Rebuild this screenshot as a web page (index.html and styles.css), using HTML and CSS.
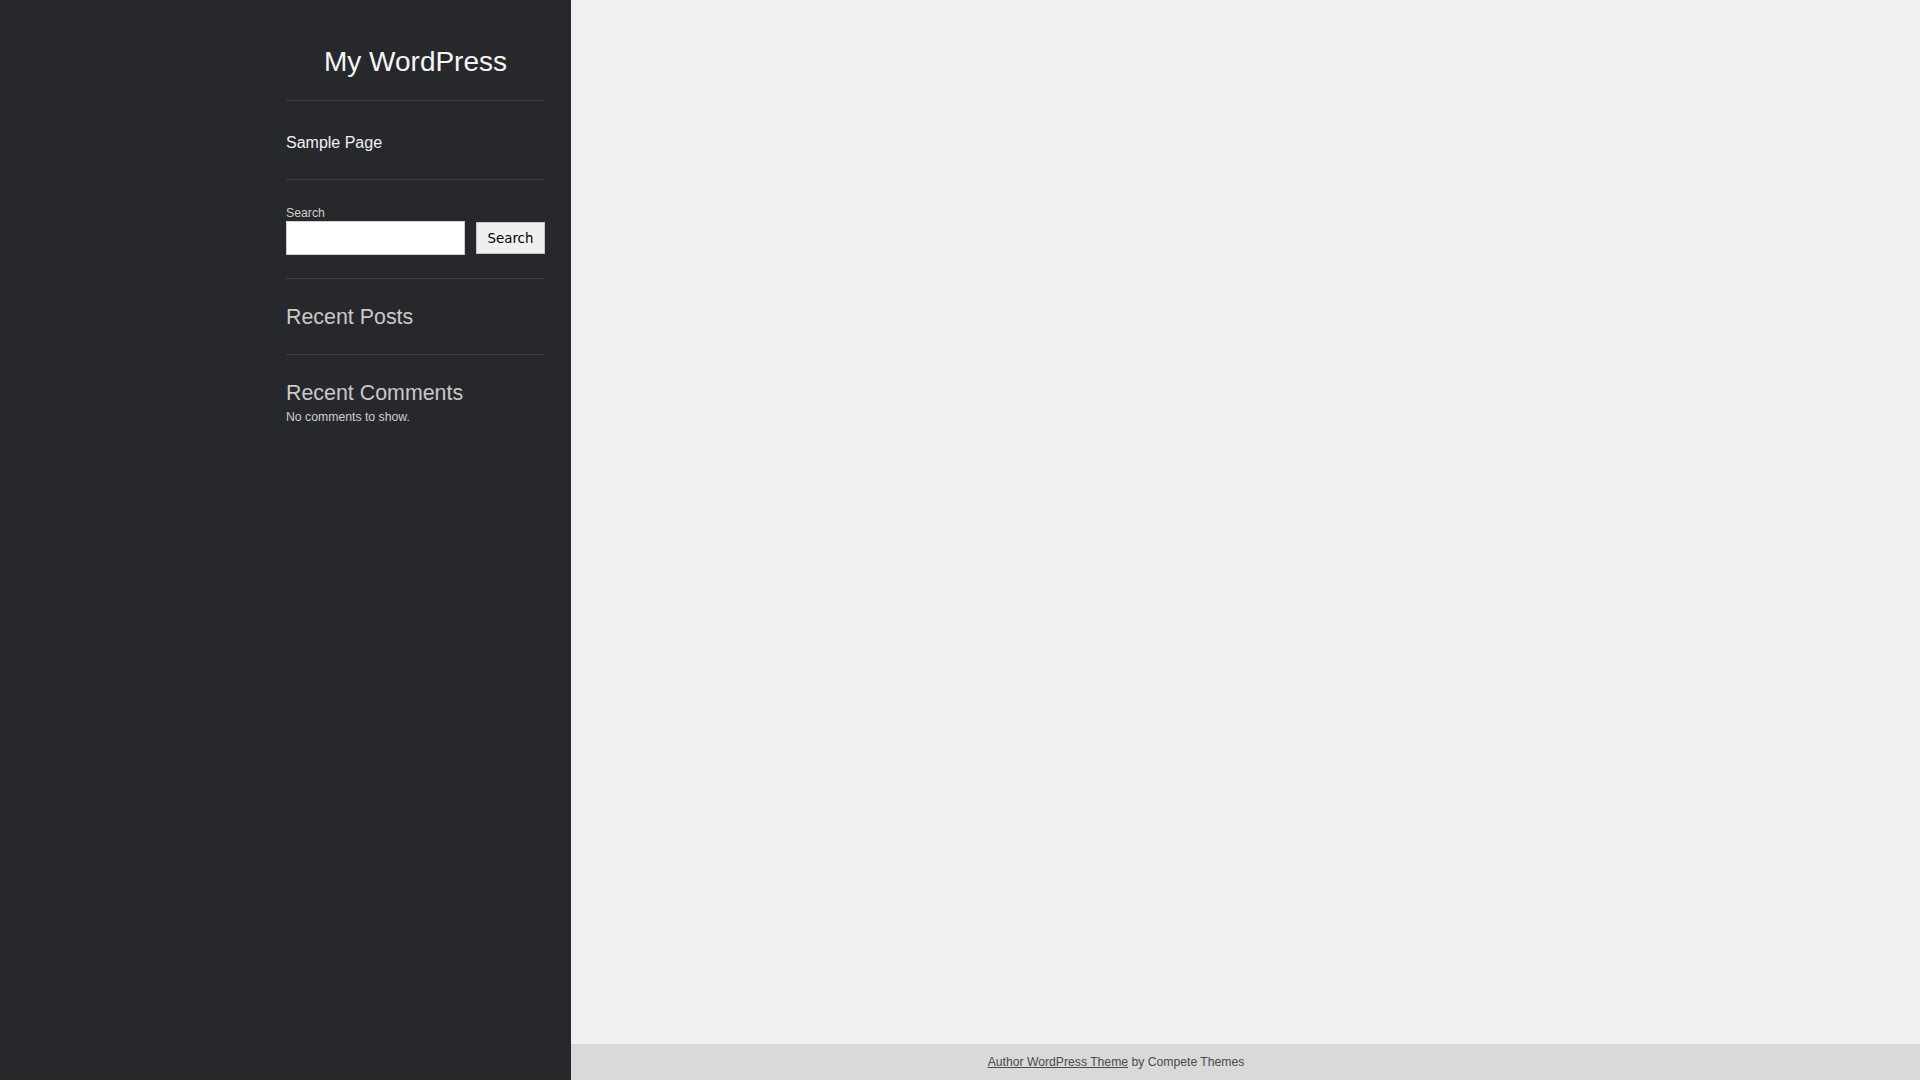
FILE: index.html
```html
<!DOCTYPE html>
<html lang="en">
<head>
<meta charset="utf-8">
<title>My WordPress</title>
<link rel="stylesheet" href="styles.css">
</head>
<body>
<div class="layout">
  <aside class="sidebar">
    <div class="sidebar-inner">
      <header class="site-header">
        <h1 class="site-title">My WordPress</h1>
      </header>
      <nav class="menu">
        <a class="menu-link" href="#">Sample Page</a>
      </nav>
      <section class="widget widget-search">
        <label class="search-label" for="s">Search</label>
        <div class="search-row">
          <input class="search-input" id="s" type="text">
          <button class="search-button" type="button">Search</button>
        </div>
      </section>
      <section class="widget widget-posts">
        <h2 class="widget-title">Recent Posts</h2>
      </section>
      <section class="widget widget-comments">
        <h2 class="widget-title">Recent Comments</h2>
        <p class="widget-text">No comments to show.</p>
      </section>
    </div>
  </aside>
  <div class="main">
    <main class="content"></main>
    <footer class="site-footer">
      <span class="credit"><a class="credit-link" href="#">Author WordPress Theme</a> by Compete Themes</span>
    </footer>
  </div>
</div>
</body>
</html>
```
FILE: styles.css
```css
html, body {
  margin: 0;
  padding: 0;
  height: 100%;
}
body {
  font-family: "Liberation Sans", Arial, sans-serif;
  background: #eff0f2;
}
.layout {
  display: flex;
  height: 100vh;
}
.sidebar {
  width: 571px;
  flex: 0 0 571px;
  background: #27282b;
  box-sizing: border-box;
  padding: 0 26px 0 286px;
}
.sidebar-inner {
  display: flex;
  flex-direction: column;
}
.site-header {
  padding: 46px 0 22px;
  border-bottom: 1px solid #3c3d42;
}
.site-title {
  margin: 0;
  font-size: 28px;
  line-height: 32px;
  font-weight: normal;
  text-align: center;
  color: #f5f5f5;
}
.menu {
  padding: 30px 0 24px;
  border-bottom: 1px solid #3c3d42;
}
.menu-link {
  display: block;
  font-size: 16px;
  line-height: 24px;
  color: #f2f2f2;
  text-decoration: none;
}
.widget {
  padding-top: 26px;
}
.widget-search {
  padding-bottom: 23px;
  border-bottom: 1px solid #3c3d42;
}
.search-label {
  display: block;
  font-size: 12.25px;
  line-height: 14px;
  color: #cfcfcf;
  margin-bottom: 1px;
}
.search-row {
  display: flex;
  align-items: center;
  gap: 11px;
}
.search-input {
  width: 179px;
  height: 34px;
  box-sizing: border-box;
  margin: 0;
  border: 1px solid #cfcfcf;
  background: #fff;
  padding: 0 6px;
}
.search-button {
  width: 69px;
  height: 32px;
  box-sizing: border-box;
  margin: 0;
  padding: 0;
  border: 1px solid #c6c6c6;
  background: #efefef;
  color: #000;
  font-family: "DejaVu Sans", sans-serif;
  font-size: 13.33px;
}
.widget-posts {
  padding-bottom: 25px;
  border-bottom: 1px solid #3c3d42;
}
.widget-title {
  margin: 0;
  font-size: 21.4px;
  line-height: 24px;
  font-weight: normal;
  color: #c9c9c9;
}
.widget-text {
  margin: 0;
  font-size: 12.25px;
  line-height: 25px;
  color: #cfcfcf;
}
.main {
  flex: 1;
  display: flex;
  flex-direction: column;
}
.content {
  flex: 1;
  background: #eff0f2;
}
.site-footer {
  height: 36px;
  background: #d9d9d9;
  text-align: center;
  padding-right: 259px;
  font-size: 12.2px;
  line-height: 36px;
  color: #4a4a4a;
}
.credit-link {
  color: #4a4a4a;
  text-decoration: underline;
}
```
